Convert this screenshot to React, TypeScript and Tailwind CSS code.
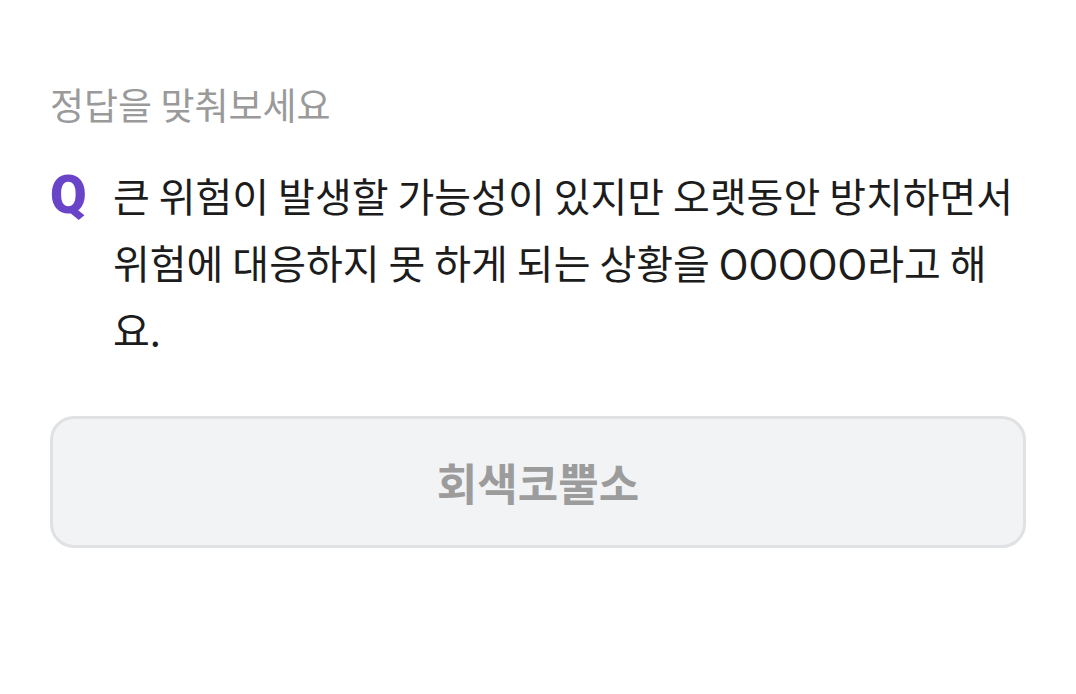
import React from 'react';

const font = { fontFamily: '"Noto Sans CJK KR", "Noto Sans", sans-serif' };

const App: React.FC = () => {
  return (
    <div className="min-h-screen w-full bg-white" style={font}>
      <div className="pl-[50px] pr-[50px] pt-[78px]">
        <p className="text-[37px] leading-[52px] text-[#9a9a9a]">정답을 맞춰보세요</p>

        <div className="mt-[32px] flex items-start">
          <span
            className="w-[63px] shrink-0 text-[53px] leading-[67px] font-black text-[#6a44c8]"
            style={{ fontFamily: 'Roboto, "Liberation Sans", sans-serif' }}
          >
            Q
          </span>
          <p className="text-[40px] leading-[67px] text-[#1c1c1c]">
            큰 위험이 발생할 가능성이 있지만 오랫동안 방치하면서 위험에 대응하지 못 하게 되는 상황을 OOOOO라고 해요.
          </p>
        </div>

        <button
          type="button"
          className="mt-[53px] flex h-[132px] w-full items-center justify-center rounded-[24px] border-[3px] border-[#e0e1e3] bg-[#f2f3f5] text-[44px] font-bold text-[#9c9c9c]"
        >
          회색코뿔소
        </button>
      </div>
    </div>
  );
};

export default App;
